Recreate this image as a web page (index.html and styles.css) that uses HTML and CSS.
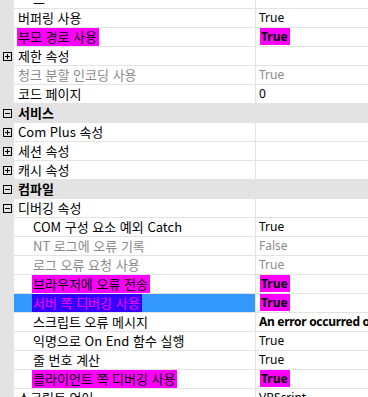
FILE: index.html
```html
<!DOCTYPE html>
<html lang="ko">
<head>
<meta charset="utf-8">
<title>속성</title>
<link rel="stylesheet" href="styles.css">
</head>
<body>
<div class="grid">
  <div class="rows">
    <div class="row"><div class="gut"></div><div class="name l2">드</div><div class="val"></div></div>
    <div class="row"><div class="gut"></div><div class="name">버퍼링 사용</div><div class="val">True</div></div>
    <div class="row"><div class="gut"></div><div class="name"><span class="hl">부모 경로 사용</span></div><div class="val"><span class="vhl">True</span></div></div>
    <div class="row"><div class="gut"><svg class="ico" width="9" height="9" viewBox="0 0 9 9"><rect x="0.5" y="0.5" width="8" height="8" fill="none" stroke="#000"/><path d="M2 4.5H7M4.5 2V7" stroke="#000"/></svg></div><div class="name">제한 속성</div><div class="val"></div></div>
    <div class="row dis"><div class="gut"></div><div class="name">청크 분할 인코딩 사용</div><div class="val">True</div></div>
    <div class="row"><div class="gut"></div><div class="name">코드 페이지</div><div class="val">0</div></div>
    <div class="row cat"><div class="gut"><svg class="ico" width="9" height="9" viewBox="0 0 9 9"><rect x="0.5" y="0.5" width="8" height="8" fill="none" stroke="#000"/><path d="M2 4.5H7" stroke="#000"/></svg></div><div class="name">서비스</div><div class="val"></div></div>
    <div class="row"><div class="gut"><svg class="ico" width="9" height="9" viewBox="0 0 9 9"><rect x="0.5" y="0.5" width="8" height="8" fill="none" stroke="#000"/><path d="M2 4.5H7M4.5 2V7" stroke="#000"/></svg></div><div class="name">Com Plus 속성</div><div class="val"></div></div>
    <div class="row"><div class="gut"><svg class="ico" width="9" height="9" viewBox="0 0 9 9"><rect x="0.5" y="0.5" width="8" height="8" fill="none" stroke="#000"/><path d="M2 4.5H7M4.5 2V7" stroke="#000"/></svg></div><div class="name">세션 속성</div><div class="val"></div></div>
    <div class="row"><div class="gut"><svg class="ico" width="9" height="9" viewBox="0 0 9 9"><rect x="0.5" y="0.5" width="8" height="8" fill="none" stroke="#000"/><path d="M2 4.5H7M4.5 2V7" stroke="#000"/></svg></div><div class="name">캐시 속성</div><div class="val"></div></div>
    <div class="row cat"><div class="gut"><svg class="ico" width="9" height="9" viewBox="0 0 9 9"><rect x="0.5" y="0.5" width="8" height="8" fill="none" stroke="#000"/><path d="M2 4.5H7" stroke="#000"/></svg></div><div class="name">컴파일</div><div class="val"></div></div>
    <div class="row"><div class="gut"><svg class="ico" width="9" height="9" viewBox="0 0 9 9"><rect x="0.5" y="0.5" width="8" height="8" fill="none" stroke="#000"/><path d="M2 4.5H7" stroke="#000"/></svg></div><div class="name">디버깅 속성</div><div class="val"></div></div>
    <div class="row"><div class="gut"></div><div class="name l2">COM 구성 요소 예외 Catch</div><div class="val">True</div></div>
    <div class="row dis"><div class="gut"></div><div class="name l2">NT 로그에 오류 기록</div><div class="val">False</div></div>
    <div class="row dis"><div class="gut"></div><div class="name l2">로그 오류 요청 사용</div><div class="val">True</div></div>
    <div class="row"><div class="gut"></div><div class="name l2"><span class="hl">브라우저에 오류 전송</span></div><div class="val"><span class="vhl">True</span></div></div>
    <div class="row sel"><div class="gut"></div><div class="name l2"><span class="hl">서버 쪽 디버깅 사용</span></div><div class="val"><span class="vhl">True</span></div></div>
    <div class="row"><div class="gut"></div><div class="name l2">스크립트 오류 메시지</div><div class="val b">An error occurred on the server when processing the URL. Please contact the system administrator.</div></div>
    <div class="row"><div class="gut"></div><div class="name l2">익명으로 On End 함수 실행</div><div class="val">True</div></div>
    <div class="row"><div class="gut"></div><div class="name l2">줄 번호 계산</div><div class="val">True</div></div>
    <div class="row"><div class="gut"></div><div class="name l2"><span class="hl">클라이언트 쪽 디버깅 사용</span></div><div class="val"><span class="vhl">True</span></div></div>
    <div class="row"><div class="gut"></div><div class="name">스크립트 언어</div><div class="val">VBScript</div></div>
  </div>
</div>
</body>
</html>
```

FILE: styles.css
```css
* { box-sizing: border-box; }
body { margin: 0; background: #fff; }
.grid {
  width: 368px;
  height: 397px;
  overflow: hidden;
  background: #fff;
  color: #000;
  font-family: "Noto Sans CJK KR", "Noto Sans", sans-serif;
  font-size: 12px;
}
.rows { margin-top: -10px; }
.row {
  display: grid;
  grid-template-columns: 14px 242px 1fr;
  height: 19px;
}
.gut {
  background: #e3e3e3;
  display: flex;
  align-items: center;
  padding: 0 0 1px 3px;
}
.ico { display: block; }
.name {
  border-bottom: 1px solid #e3e3e3;
  border-right: 1px solid #e3e3e3;
  padding-left: 4px;
  font-size: 13px;
  line-height: 18px;
  white-space: nowrap;
  overflow: hidden;
}
.name.l2 { padding-left: 19px; }
.val {
  border-bottom: 1px solid #e3e3e3;
  padding-left: 3px;
  line-height: 18px;
  white-space: nowrap;
  overflow: hidden;
  font-family: "Noto Sans", "Noto Sans CJK KR", sans-serif;
}
.val.b { font-weight: bold; letter-spacing: -0.3px; }
.dis .name, .dis .val { color: #8a8a8a; }
.cat { background: #e3e3e3; }
.cat .name { font-weight: bold; border-right: 0; }
.cat .val { border-bottom-color: #e3e3e3; }
.sel .name { background: #3399ff; }
.hl {
  background: #ff00ff;
  padding: 0 2px 0 1px;
  margin-left: -1px;
}
.sel .hl { background: #3300ff; color: #ff00ff; }
.vhl {
  background: #ff00ff;
  font-weight: bold;
  padding: 0 2px 0 1px;
  margin-left: 1px;
}
```
